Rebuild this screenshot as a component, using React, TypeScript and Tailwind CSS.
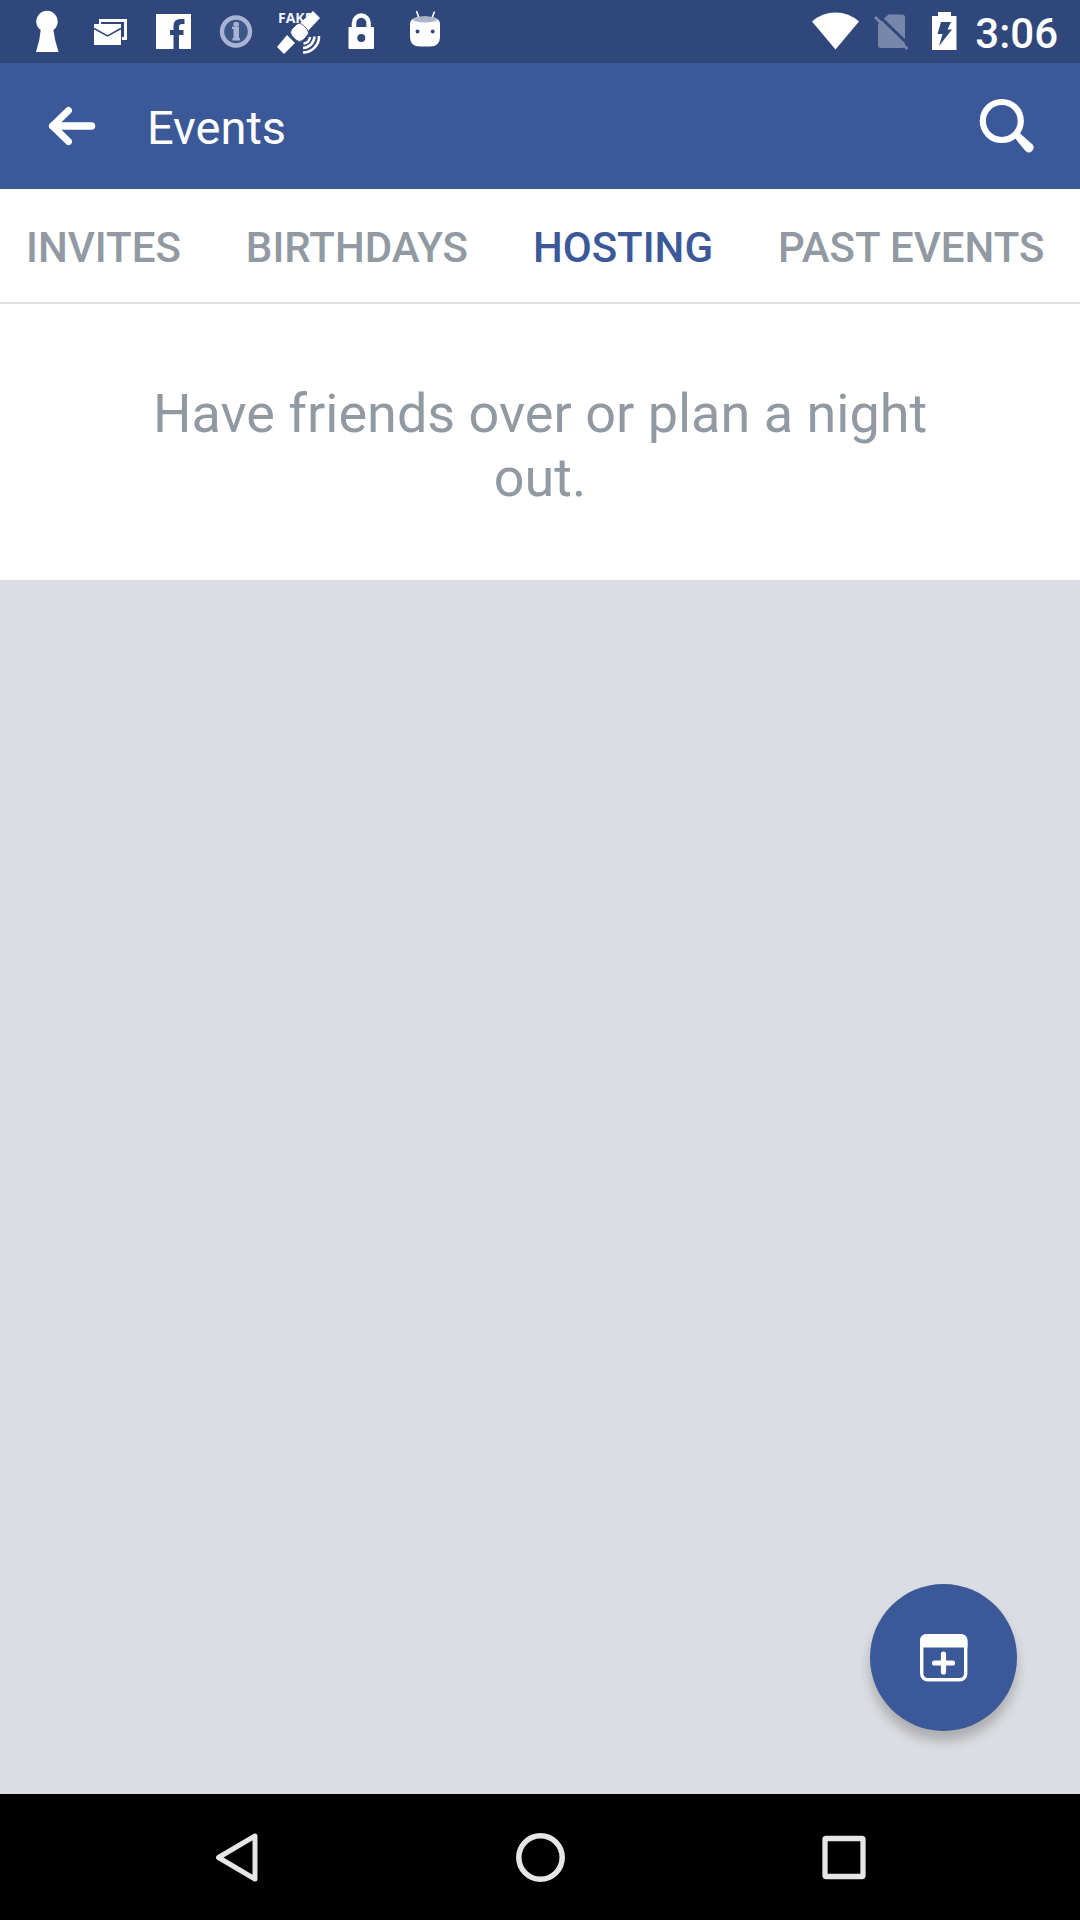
import type { ReactNode } from "react";

function StatusIcon({ label, children }: { label: string; children: ReactNode }) {
  return (
    <svg role="img" aria-label={label} viewBox="0 0 63 63" className="size-[63px] shrink-0" fill="#fff">
      {children}
    </svg>
  );
}

function StatusBar() {
  return (
    <div className="flex h-[63px] items-center justify-between bg-[#2f477a] pr-[22px] pl-4">
      <div className="flex">
        <StatusIcon label="VPN key">
          <circle cx="31" cy="21.5" r="10.7" />
          <path d="M25 28 Q24 40 20 52 H42.5 Q38.5 40 37 28 Z" />
        </StatusIcon>
        <StatusIcon label="Mail">
          <path d="M20 19 H48 V40 H43 V37 H45 V22 H22 V24 H20 Z" />
          <path d="M15 24 H42 V45 H15 Z" />
          <path d="M15 28.5 L28.5 36 L42 28.5" fill="none" stroke="#2f477a" strokeWidth="1.5" />
        </StatusIcon>
        <StatusIcon label="Facebook">
          <path d="M14 14 H49 V49 H37 V35 H41.5 V30 H37 V27 Q37 24 40 24 H42.5 V19 H38.5 Q31.5 19 31.5 26 V30 H28 V35 H31.5 V49 H14 Z" />
        </StatusIcon>
        <StatusIcon label="Information">
          <circle cx="31" cy="31.5" r="14" fill="#3f5689" stroke="#a9b4d5" strokeWidth="4.4" />
          <rect x="28.5" y="22" width="5.5" height="4.5" rx="2" fill="#a9b4d5" />
          <path d="M27 26.5 H34 V38 H35 V40.5 H27.500 V38 H28.500 V29 H27 Z" fill="#a9b4d5" />
        </StatusIcon>
        <StatusIcon label="Fake location">
          <text x="10" y="23" fontSize="14" fontWeight="700" fontFamily="Open Sans, sans-serif" fill="#f1f4fa">FAKE</text>
          <g>
            <path d="M45 11 L52 18 L39 32 L31 24 Z" />
            <path d="M19 35 L27 43 L16 54 L9 47 Z" />
            <path
              d="M29 24 Q32 22 35 25 L39 29 Q42 33 39 36 L35 40 Q32 43 28 40 L24 36 Q21 32 24 29 Z"
              stroke="#2f477a"
              strokeWidth="0.8"
            />
          </g>
          <g fill="none" stroke="#fff" strokeWidth="2.6">
            <path d="M51 36 A16 16 0 0 1 35 52.5" />
            <path d="M46.5 36.5 A12 12 0 0 1 35 48" />
            <path d="M42 37 A7 7 0 0 1 35.5 43.5" />
          </g>
        </StatusIcon>
        <StatusIcon label="Locked">
          <path d="M23 29 V23 A7.3 7.5 0 0 1 37.6 23 V29" fill="none" stroke="#fff" strokeWidth="4.5" />
          <rect x="17.5" y="27" width="25.5" height="22" rx="1" />
          <circle cx="30.3" cy="38" r="4" fill="#2f477a" />
        </StatusIcon>
        <StatusIcon label="Android">
          <path d="M22.5 11 L25 18 M40.5 11.5 L38 18" stroke="#fff" strokeWidth="1.6" />
          <path d="M16 24 Q16 16.5 31 16.5 Q46 16.5 46 24 V37 Q46 46.5 36 46.5 H26 Q16 46.5 16 37 Z" />
          <ellipse cx="31" cy="19.5" rx="12" ry="3" fill="#aab4c9" />
          <circle cx="23.5" cy="31.5" r="1.9" fill="#2f477a" />
          <circle cx="38.7" cy="31.5" r="1.9" fill="#2f477a" />
        </StatusIcon>
      </div>
      <div className="flex items-center">
        <svg role="img" aria-label="Wi-Fi" viewBox="0 0 48 63" className="h-[63px] w-12" fill="#fff">
          <path d="M0 21.5 Q10 12.5 23.500 12.5 Q37 12.5 47 21.5 L23.500 49.500 Z" />
        </svg>
        <svg role="img" aria-label="No SIM" viewBox="0 0 63 63" className="ml-2 h-[63px] w-[63px]">
          <path d="M20.5 14.5 H34 Q37 14.5 37 17.5 V48 H13 Q10 48 10 45 V24 Z" fill="#7787aa" />
          <path d="M9.5 14.5 L42 46" stroke="#2f477a" strokeWidth="3" />
          <path d="M7 17 L39.5 49" stroke="#7787aa" strokeWidth="3" />
        </svg>
        <svg role="img" aria-label="Battery charging" viewBox="0 0 36 63" className="h-[63px] w-9" fill="#fff">
          <path d="M7 12 H20 V16 H25.5 V50 H1 V16 H7 Z" />
          <path d="M10 22 H20 L16.5 29.5 H21 L8 46 L11.5 34 H6.5 Z" fill="#2f477a" />
        </svg>
        <span className="ml-2 pt-1 text-[42px] leading-[59px] font-medium text-white">3:06</span>
      </div>
    </div>
  );
}

function AppBar() {
  return (
    <header className="flex h-[126px] items-center bg-[#3b5998] text-white">
      <button type="button" aria-label="Back" className="flex size-36 items-center justify-center">
        <svg viewBox="0 0 48 40" className="h-10 w-12" fill="none" stroke="#fff" strokeLinecap="round" strokeLinejoin="round">
          <path d="M5 20 H43.5" strokeWidth="7.5" />
          <path d="M20.5 4.5 L4.5 20 L20.5 35.5" strokeWidth="7" />
        </svg>
      </button>
      <h1 className="flex-1 pt-[3px] pl-[3px] text-[47px] leading-[56px]">Events</h1>
      <button type="button" aria-label="Search" className="mr-[43px] flex items-center justify-center">
        <svg viewBox="0 0 60 60" className="size-[60px]" fill="none" stroke="#fff">
          <circle cx="24.8" cy="25" r="19" strokeWidth="6.2" />
          <path d="M37 41 L42 36.5 L55.5 48.5 Q58 52 55 55 Q52 58 48.5 55 Z" fill="#fff" stroke="none" />
        </svg>
      </button>
    </header>
  );
}

const tabs = ["INVITES", "BIRTHDAYS", "HOSTING", "PAST EVENTS"];

function Tabs() {
  return (
    <nav role="tablist" aria-label="Event lists" className="flex h-[115px] items-center gap-[65px] overflow-hidden border-b-2 border-[#dddfe2] bg-white px-[26px] pt-[5px]">
      {tabs.map((tab) => (
        <button
          key={tab}
          type="button"
          role="tab"
          aria-selected={tab === "HOSTING"}
          className="text-[42px] leading-[50px] font-medium whitespace-nowrap text-[#9199a3] aria-selected:text-[#3b5998]"
        >
          {tab}
        </button>
      ))}
    </nav>
  );
}

function NavigationBar() {
  return (
    <nav aria-label="System" className="grid h-[126px] grid-cols-3 bg-black px-[84px]">
      <button type="button" aria-label="System back" className="flex items-center justify-center">
        <svg viewBox="0 0 50 50" className="size-[50px]" fill="none" stroke="#e6e6e6" strokeWidth="5" strokeLinejoin="round">
          <path d="M44 4 V47 L7.5 25.5 Z" />
        </svg>
      </button>
      <button type="button" aria-label="Home" className="flex items-center justify-center">
        <svg viewBox="0 0 50 50" className="size-[50px]" fill="none" stroke="#e6e6e6" strokeWidth="5.5">
          <circle cx="25.5" cy="25.5" r="21.7" />
        </svg>
      </button>
      <button type="button" aria-label="Recent apps" className="flex items-center justify-center">
        <svg viewBox="0 0 50 50" className="size-[50px]" fill="none" stroke="#e6e6e6" strokeWidth="5.3" strokeLinejoin="round">
          <rect x="6" y="6.5" width="38" height="38" rx="1" />
        </svg>
      </button>
    </nav>
  );
}

export default function App() {
  return (
    <div className="flex min-h-screen flex-col bg-[#dcdde2] font-[Roboto,sans-serif]">
      <StatusBar />
      <AppBar />
      <Tabs />
      <main className="relative flex-1">
        <section className="bg-white px-[120px] pt-[78px] pb-[70px]">
          <p className="text-center text-[54px] leading-[64px] text-[#9199a3]">
            Have friends over or plan a night out.
          </p>
        </section>
        <button
          type="button"
          aria-label="Create event"
          className="absolute right-[63px] bottom-[63px] flex size-[147px] items-center justify-center rounded-full bg-[#3b5998] shadow-[0_10px_12px_rgba(0,0,0,0.22)]"
        >
          <svg viewBox="0 0 48 48" className="size-12" fill="none" stroke="#fff">
            <rect x="1.7" y="1.7" width="44" height="44" rx="6" strokeWidth="3.4" />
            <path d="M0 13.5 V7 Q0 0 7 0 H40.5 Q47.5 0 47.5 7 V13.5 Z" fill="#fff" stroke="none" />
            <path d="M14.5 29 H32.5 M23.5 20 V38" strokeWidth="5.2" strokeLinecap="round" />
          </svg>
        </button>
      </main>
      <NavigationBar />
    </div>
  );
}
